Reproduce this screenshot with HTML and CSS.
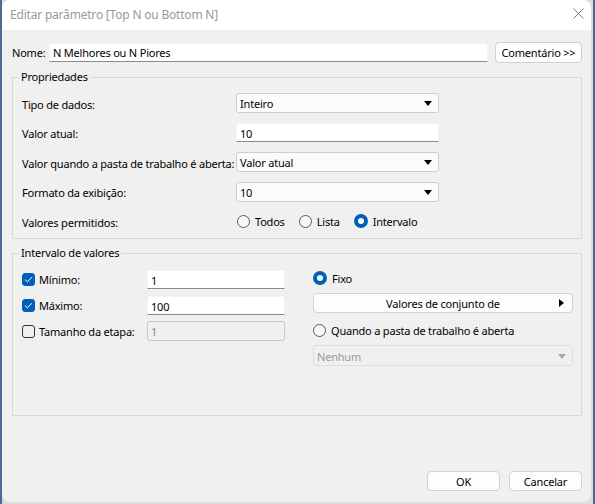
FILE: index.html
```html
<!DOCTYPE html>
<html lang="pt">
<head>
<meta charset="utf-8">
<link rel="stylesheet" href="styles.css">
</head>
<body>
<div class="window">
  <div class="titlebar">
    <span class="title">Editar parâmetro [Top N ou Bottom N]</span>
    <svg class="close" width="11" height="11" viewBox="0 0 11 11"><path d="M0.5 0.5 L10.5 10.5 M10.5 0.5 L0.5 10.5" stroke="#7a7a7a" stroke-width="1" fill="none"/></svg>
  </div>
  <div class="content">
    <div class="name-row">
      <span class="name-label">Nome:</span>
      <div class="input name-input">N Melhores ou N Piores</div>
      <div class="btn comment-btn">Comentário &gt;&gt;</div>
    </div>

    <fieldset class="group props">
      <legend>Propriedades</legend>
      <div class="props-grid">
        <span class="lbl">Tipo de dados:</span>
        <div class="select"><span>Inteiro</span><span class="caret"></span></div>

        <span class="lbl">Valor atual:</span>
        <div class="input">10</div>

        <span class="lbl">Valor quando a pasta de trabalho é aberta:</span>
        <div class="select"><span>Valor atual</span><span class="caret"></span></div>

        <span class="lbl">Formato da exibição:</span>
        <div class="select"><span>10</span><span class="caret"></span></div>

        <span class="lbl">Valores permitidos:</span>
        <div class="radios">
          <span class="radio-item"><span class="radio"></span>Todos</span>
          <span class="radio-item"><span class="radio"></span>Lista</span>
          <span class="radio-item"><span class="radio on"></span>Intervalo</span>
        </div>
      </div>
    </fieldset>

    <fieldset class="group range">
      <legend>Intervalo de valores</legend>
      <div class="range-body">
        <div class="range-left">
          <div class="chk-row">
            <span class="chk-item"><span class="check on"><svg width="9" height="7" viewBox="0 0 9 7"><path d="M1 3.6 L3.3 5.8 L8 1.2" stroke="#fff" stroke-width="1" fill="none"/></svg></span>Mínimo:</span>
            <div class="input small">1</div>
          </div>
          <div class="chk-row">
            <span class="chk-item"><span class="check on"><svg width="9" height="7" viewBox="0 0 9 7"><path d="M1 3.6 L3.3 5.8 L8 1.2" stroke="#fff" stroke-width="1" fill="none"/></svg></span>Máximo:</span>
            <div class="input small">100</div>
          </div>
          <div class="chk-row">
            <span class="chk-item"><span class="check"></span>Tamanho da etapa:</span>
            <div class="input small disabled">1</div>
          </div>
        </div>
        <div class="range-right">
          <span class="radio-item r-fixo"><span class="radio on"></span>Fixo</span>
          <div class="btn set-btn"><span>Valores de conjunto de</span><span class="tri"></span></div>
          <span class="radio-item r-quando"><span class="radio"></span>Quando a pasta de trabalho é aberta</span>
          <div class="select disabled"><span>Nenhum</span><span class="caret"></span></div>
        </div>
      </div>
    </fieldset>
  </div>
  <div class="footer">
    <div class="btn dlg-btn">OK</div>
    <div class="btn dlg-btn">Cancelar</div>
  </div>
</div>
</body>
</html>
```

FILE: styles.css
```css
* { box-sizing: border-box; }
html, body { margin: 0; padding: 0; }
body {
  width: 595px;
  height: 504px;
  overflow: hidden;
  background: linear-gradient(90deg, #4a6b93 0 2px, #dcdcdc 2px 593px, #4a6b93 593px);
  font-family: "Noto Sans", sans-serif;
  font-size: 11px;
  letter-spacing: -0.2px;
  color: #000;
}
.window {
  margin-left: 2px;
  width: 589px;
  height: 502px;
  background: #f0f0f0;
  border-radius: 8px;
  overflow: hidden;
  display: flex;
  flex-direction: column;
}
.titlebar {
  height: 30px;
  background: #fff;
  display: flex;
  align-items: center;
  justify-content: space-between;
  padding: 0 7px 1px 8px;
  flex: none;
}
.title { color: #999; font-size: 12px; letter-spacing: -0.2px; }
.close { margin-bottom: 2px; }
.content { padding: 12px 9px 0 10px; }

.name-row { display: flex; align-items: center; height: 20px; }
.name-label { width: 37px; padding-top: 1px; }
.name-input { flex: 1; height: 20px; }
.comment-btn { width: 87px; margin-left: 7px; height: 21px; }

.input {
  background: #fff;
  border: 1px solid #f4f4f4;
  border-bottom-color: #8a8a8a;
  height: 19px;
  display: flex;
  align-items: center;
  padding-left: 3px;
  padding-top: 1px;
  line-height: 1;
}
.input.disabled {
  background: #f0f0f0;
  border: 1px solid #c9c9c9;
  border-radius: 3px;
  color: #8a8a8a;
  height: 20px;
}
.btn {
  background: #fdfdfd;
  border: 1px solid #d0d0d0;
  border-radius: 4px;
  display: flex;
  align-items: center;
  justify-content: center;
  line-height: 1;
  padding-top: 1px;
}

.group {
  margin: 0;
  border: 1px solid #d9d9d9;
  padding: 0;
  min-width: 0;
}
.group legend {
  padding: 0 2px;
  margin-left: -3px;
  line-height: 16px;
}
.props { margin-top: 7px; padding: 8px 0 7px 9px; }
.props-grid {
  display: grid;
  grid-template-columns: 214px 203px;
  grid-template-rows: repeat(5, 20px);
  row-gap: 9.5px;
  align-items: center;
}
.lbl { white-space: nowrap; padding-top: 2px; }
.select {
  height: 20px;
  border: 1px solid #cdcdcd;
  border-radius: 3px;
  background: #fbfbfb;
  display: flex;
  align-items: center;
  justify-content: space-between;
  padding: 1px 6px 0 3px;
  line-height: 1;
}
.caret {
  width: 0; height: 0;
  border-left: 4px solid transparent;
  border-right: 4px solid transparent;
  border-top: 5px solid #000;
}
.select.disabled { color: #9a9a9a; background: #f0f0f0; border-color: #dedede; }
.select.disabled .caret { border-top-color: #a8a8a8; }

.radios { display: flex; align-items: center; padding-left: 1px; }
.radio-item { display: inline-flex; align-items: center; white-space: nowrap; margin-right: 14px; }
.radio {
  width: 13px; height: 13px;
  border: 1px solid #5a5a5a;
  border-radius: 50%;
  background: #f7f7f7;
  margin-right: 5px;
  flex: none;
}
.radio.on {
  border: 4px solid #005fb8;
  background: #fff;
  width: 14px; height: 14px;
}

.range { margin-top: 6px; height: 171px; padding: 9px 0 0 9px; }
.range-body { display: flex; }
.range-left { width: 263px; display: flex; flex-direction: column; gap: 7px; }
.chk-row { display: flex; align-items: center; justify-content: space-between; height: 19px; }
.chk-item { display: inline-flex; align-items: center; white-space: nowrap; }
.check {
  width: 13px; height: 13px;
  border: 1px solid #333;
  border-radius: 3px;
  margin-right: 4px;
  display: inline-flex; align-items: center; justify-content: center;
  flex: none;
}
.check.on { background: #005fb8; border-color: #005fb8; }
.input.small { width: 138px; }
.chk-row:nth-child(3) { height: 20px; margin-top: -1px; }

.range-right {
  margin-left: 28px;
  width: 260px;
  display: flex;
  flex-direction: column;
  align-items: stretch;
}
.r-fixo { margin-top: 1px; height: 14px; }
.set-btn { margin-top: 8px; height: 20px; justify-content: center; position: relative; }
.set-btn .tri {
  position: absolute; right: 8px; top: 5px;
  width: 0; height: 0;
  border-top: 4px solid transparent;
  border-bottom: 4px solid transparent;
  border-left: 5px solid #000;
}
.r-quando { margin-top: 10px; height: 14px; }
.range-right .select { margin-top: 8px; height: 21px; }

.footer {
  margin-top: auto;
  display: flex;
  justify-content: flex-end;
  gap: 9px;
  padding: 0 9px 11px 0;
}
.dlg-btn { width: 73px; height: 20px; }
```
